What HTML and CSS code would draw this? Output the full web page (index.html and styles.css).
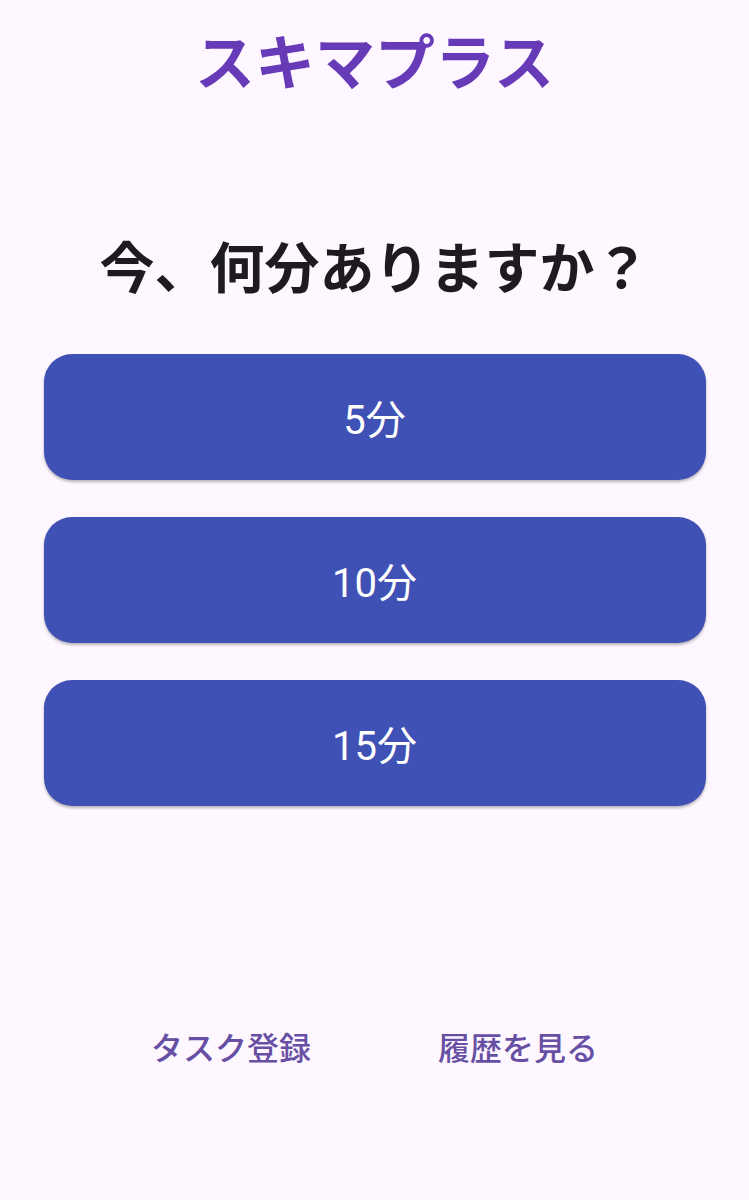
FILE: index.html
```html
<!DOCTYPE html>
<html lang="ja">
<head>
<meta charset="utf-8">
<title>スキマプラス</title>
<link rel="stylesheet" href="styles.css">
</head>
<body>
<main class="screen">
  <h1 class="title">スキマプラス</h1>
  <h2 class="question">今、何分ありますか？</h2>
  <div class="choices">
    <button class="choice">5分</button>
    <button class="choice">10分</button>
    <button class="choice">15分</button>
  </div>
  <nav class="links">
    <button class="link">タスク登録</button>
    <button class="link">履歴を見る</button>
  </nav>
</main>
</body>
</html>
```
FILE: styles.css
```css
html, body {
  margin: 0;
  padding: 0;
  background: #FEF7FF;
}
body {
  font-family: "Noto Sans CJK JP", "Noto Sans", sans-serif;
  width: 749px;
  height: 1200px;
  overflow: hidden;
}
.screen {
  display: flex;
  flex-direction: column;
  align-items: center;
  padding-top: 23px;
}
.title {
  margin: 0;
  font-size: 60px;
  line-height: 72px;
  font-weight: 700;
  color: #673AB7;
}
.question {
  margin: 136px 0 0 0;
  font-size: 55px;
  line-height: 66px;
  font-weight: 700;
  color: #1D1B20;
}
.choices {
  margin-top: 57px;
  display: flex;
  flex-direction: column;
  gap: 37px;
  width: 662px;
}
.choice {
  height: 126px;
  border: none;
  border-radius: 28px;
  background: #3F51B5;
  color: #FFFFFF;
  font-family: Roboto, "Noto Sans CJK JP", sans-serif;
  font-size: 40px;
  font-weight: 400;
  box-shadow: 0 2px 3px rgba(0, 0, 0, 0.28);
  padding: 0;
}
.links {
  margin-top: 218px;
  display: flex;
  gap: 127px;
}
.link {
  border: none;
  background: transparent;
  padding: 0;
  font-family: "Noto Sans CJK JP", "Noto Sans", sans-serif;
  font-size: 32px;
  line-height: 44px;
  font-weight: 500;
  color: #6750A4;
}
```
